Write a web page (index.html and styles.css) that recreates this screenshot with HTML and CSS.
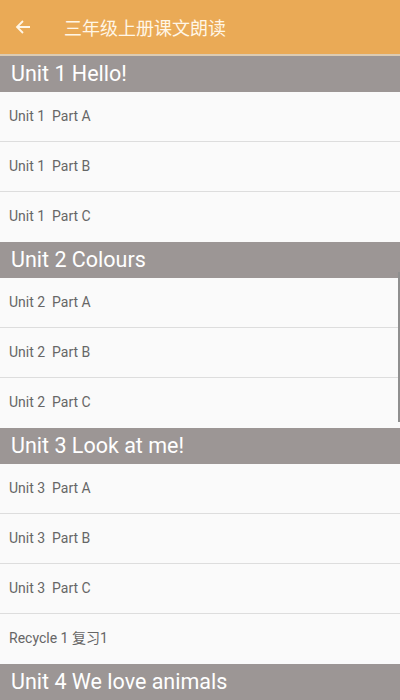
FILE: index.html
```html
<!DOCTYPE html>
<html lang="zh">
<head>
    <meta charset="UTF-8">
    <title>三年级上册课文朗读</title>
    <link rel="stylesheet" href="styles.css">
</head>
<body>
    <div class="top-bar">
        <span class="back">
            <svg width="16" height="16" viewBox="0 0 16 16"><path d="M15 8H2M8 2L2 8l6 6" fill="none" stroke="#fff6e6" stroke-width="1.8"/></svg>
        </span>
        <span class="title">三年级上册课文朗读</span>
    </div>
    <div class="list">
        <div class="unit">Unit 1 Hello!</div>
        <div class="item">Unit 1&nbsp;&nbsp;Part A</div>
        <div class="item">Unit 1&nbsp;&nbsp;Part B</div>
        <div class="item last">Unit 1&nbsp;&nbsp;Part C</div>
        <div class="unit">Unit 2 Colours</div>
        <div class="item">Unit 2&nbsp;&nbsp;Part A</div>
        <div class="item">Unit 2&nbsp;&nbsp;Part B</div>
        <div class="item last">Unit 2&nbsp;&nbsp;Part C</div>
        <div class="unit">Unit 3 Look at me!</div>
        <div class="item">Unit 3&nbsp;&nbsp;Part A</div>
        <div class="item">Unit 3&nbsp;&nbsp;Part B</div>
        <div class="item">Unit 3&nbsp;&nbsp;Part C</div>
        <div class="item last">Recycle 1 复习1</div>
        <div class="unit">Unit 4 We love animals</div>
        <div class="scroll-bar"></div>
    </div>
</body>
</html>
```
FILE: styles.css
```css
body,div,span{
    padding: 0;
    margin: 0;
}
body{
    width: 400px;
    height: 700px;
    overflow: hidden;
    background-color: #fafafa;
    font-family: Roboto, "Noto Sans CJK SC", sans-serif;
}
.top-bar{
    display: flex;
    align-items: center;
    height: 54px;
    background-color: #eaaa56;
    border-bottom: 2px solid #dccbb2;
}
.back{
    display: flex;
    width: 16px;
    height: 16px;
    margin-left: 15px;
}
.title{
    margin-left: 33px;
    font-size: 18px;
    color: #fff6e6;
}
.list{
    position: relative;
}
.unit{
    height: 36px;
    line-height: 36px;
    padding-left: 11px;
    background-color: #9c9695;
    font-size: 21.5px;
    color: #fff;
}
.item{
    height: 49px;
    line-height: 49px;
    padding-left: 9px;
    border-bottom: 1px solid #dddddd;
    font-size: 14px;
    color: #666;
}
.item.last{
    border-bottom: none;
    height: 50px;
}
.scroll-bar{
    position: absolute;
    right: 0;
    top: 216px;
    width: 2px;
    height: 150px;
    background-color: #8f8f8f;
}
```
